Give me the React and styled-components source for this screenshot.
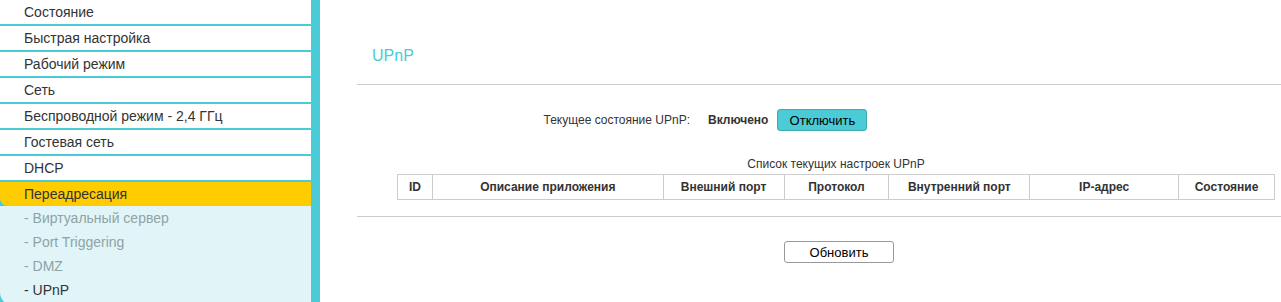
import React from "react";
import styled, { createGlobalStyle } from "styled-components";

const Global = createGlobalStyle`
  html, body { margin: 0; padding: 0; background: #fff; }
  body { font-family: "Liberation Sans", Arial, sans-serif; color: #333; }
  * { box-sizing: border-box; }
`;

const Page = styled.div`
  display: flex;
  width: 1281px;
  height: 302px;
  overflow: hidden;
`;

const Sidebar = styled.nav`
  width: 320px;
  flex-shrink: 0;
  border-right: 9px solid #4acbd6;
  background: #4acbd6;
  display: flex;
  flex-direction: column;
  gap: 2px;
`;

const MenuItem = styled.div`
  height: 24px;
  line-height: 24px;
  padding-left: 24px;
  font-size: 14px;
  color: #333;
  background: ${(p) => (p.$active ? "#ffcc00" : "#fff")};
  border-bottom-left-radius: ${(p) => (p.$active ? "8px" : "0")};
`;

const SubMenu = styled.div`
  background: #e1f5f8;
  margin-top: -2px;
  flex: 1;
  min-height: 100px;
  border-bottom-left-radius: 14px;
  display: flex;
  flex-direction: column;
`;

const SubItem = styled.div`
  height: 24px;
  line-height: 24px;
  padding-left: 24px;
  font-size: 14px;
  color: ${(p) => (p.$active ? "#333" : "#8fa3a5")};
`;

const Main = styled.main`
  flex: 1;
  padding-left: 37px;
  padding-top: 46px;
`;

const Title = styled.h2`
  margin: 0;
  padding-left: 15px;
  font-size: 16px;
  font-weight: normal;
  line-height: 20px;
  color: #4acbd6;
`;

const Divider = styled.hr`
  margin: 18px 0 0 0;
  border: 0;
  border-top: 1px solid #cccccc;
  height: 0;
`;

const StatusRow = styled.div`
  display: flex;
  align-items: center;
  margin-top: 24px;
  height: 22px;
  font-size: 12px;
`;

const StatusLabel = styled.span`
  width: 333px;
  text-align: right;
  color: #333;
`;

const StatusValue = styled.span`
  margin-left: 18px;
  font-weight: bold;
  color: #333;
`;

const Button = styled.button`
  font-family: "Liberation Sans", Arial, sans-serif;
  font-size: 13px;
  height: 22px;
  padding: 0;
  border: 1px solid ${(p) => (p.$primary ? "#3fa9b2" : "#999")};
  border-radius: 3px;
  background: ${(p) => (p.$primary ? "#4acbd6" : "#fff")};
  color: #000;
  width: ${(p) => p.$w}px;
  cursor: pointer;
`;

const StatusButton = styled(Button)`
  margin-left: 9px;
`;

const Caption = styled.div`
  margin-top: 26px;
  margin-left: 40px;
  width: 878px;
  text-align: center;
  font-size: 12px;
  line-height: 14px;
  color: #333;
`;

const Table = styled.table`
  margin-top: 3px;
  margin-left: 40px;
  width: 878px;
  border-collapse: collapse;
  font-size: 12px;
`;

const Th = styled.th`
  border: 1px solid #cccccc;
  height: 25px;
  padding: 0;
  font-weight: bold;
  color: #333;
  text-align: center;
  width: ${(p) => p.$w}px;
`;

const Footer = styled.div`
  margin-top: 16px;
  border-top: 1px solid #cccccc;
  padding-top: 24px;
  padding-left: 427px;
`;

const menu = [
  "Состояние",
  "Быстрая настройка",
  "Рабочий режим",
  "Сеть",
  "Беспроводной режим - 2,4 ГГц",
  "Гостевая сеть",
  "DHCP",
];

const sub = ["- Виртуальный сервер", "- Port Triggering", "- DMZ", "- UPnP"];

const cols = [
  ["ID", 35],
  ["Описание приложения", 231],
  ["Внешний порт", 121],
  ["Протокол", 105],
  ["Внутренний порт", 141],
  ["IP-адрес", 149],
  ["Состояние", 96],
];

export default function App() {
  return (
    <>
      <Global />
      <Page>
        <Sidebar>
          {menu.map((m) => (
            <MenuItem key={m}>{m}</MenuItem>
          ))}
          <MenuItem $active>Переадресация</MenuItem>
          <SubMenu>
            {sub.map((s, i) => (
              <SubItem key={s} $active={i === sub.length - 1}>
                {s}
              </SubItem>
            ))}
          </SubMenu>
        </Sidebar>
        <Main>
          <Title>UPnP</Title>
          <Divider />
          <StatusRow>
            <StatusLabel>Текущее состояние UPnP:</StatusLabel>
            <StatusValue>Включено</StatusValue>
            <StatusButton $primary $w={90}>
              Отключить
            </StatusButton>
          </StatusRow>
          <Caption>Список текущих настроек UPnP</Caption>
          <Table>
            <thead>
              <tr>
                {cols.map(([c, w]) => (
                  <Th key={c} $w={w}>
                    {c}
                  </Th>
                ))}
              </tr>
            </thead>
          </Table>
          <Footer>
            <Button $w={110}>Обновить</Button>
          </Footer>
        </Main>
      </Page>
    </>
  );
}
